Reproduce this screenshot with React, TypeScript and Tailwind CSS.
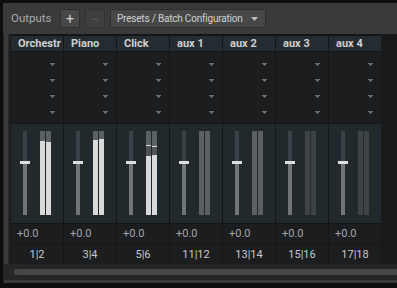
import React from "react";

type Ch = {
  name: string;
  port: string;
  meters: { fill: number; peak?: number }[] | null;
  meterBg: string;
};

const channels: Ch[] = [
  { name: "Orchestr", port: "1|2", meters: [{ fill: 74 }, { fill: 73 }], meterBg: "#5b6064" },
  { name: "Piano", port: "3|4", meters: [{ fill: 75 }, { fill: 76 }], meterBg: "#5b6064" },
  { name: "Click", port: "5|6", meters: [{ fill: 59, peak: 69 }, { fill: 60, peak: 68 }], meterBg: "#5b6064" },
  { name: "aux 1", port: "11|12", meters: null, meterBg: "#5c6064" },
  { name: "aux 2", port: "13|14", meters: null, meterBg: "#5c6064" },
  { name: "aux 3", port: "15|16", meters: null, meterBg: "#3d4347" },
  { name: "aux 4", port: "17|18", meters: null, meterBg: "#3d4347" },
];

const font = { fontFamily: "Roboto, 'DejaVu Sans', sans-serif" };

function Arrow() {
  return (
    <svg width="6" height="4" viewBox="0 0 6 4" className="block">
      <path d="M0 0H5V1H4V2H3V3H2V2H1V1H0Z" fill="#6b7075" />
    </svg>
  );
}

function Meter({ m, bg }: { m?: { fill: number; peak?: number }; bg: string }) {
  return (
    <div className="relative w-[5px] h-[84px]" style={{ background: bg }}>
      {m && (
        <>
          {m.peak !== undefined && (
            <>
              <div className="absolute left-0 right-0 bottom-0 bg-[#4d5357]" style={{ height: m.peak }} />
              <div className="absolute left-0 right-0 h-px bg-[#dcdcdc]" style={{ bottom: m.peak }} />
            </>
          )}
          <div className="absolute left-0 right-0 bottom-0 bg-[#d9d9d9]" style={{ height: m.fill }} />
        </>
      )}
    </div>
  );
}

function Column({ ch }: { ch: Ch }) {
  return (
    <div className="flex flex-col w-[52px] gap-px">
      <div className="h-[15px] bg-[#252c31] text-[#cdd0d2] text-[11px] font-bold leading-[15px] pl-[7px] overflow-hidden whitespace-nowrap">
        {ch.name}
      </div>
      <div className="h-[71px] bg-[#1c1d1f] flex flex-col pt-[11px] gap-[12px] items-end pr-[7px]">
        <Arrow />
        <Arrow />
        <Arrow />
        <Arrow />
      </div>
      <div className="h-[99px] bg-[#22292d] flex pt-[7px] pl-[9px]">
        <div className="relative w-[10px] h-[84px] flex justify-center">
          <div className="w-[4px] h-[84px] flex flex-col">
            <div className="h-[30px] bg-[#3a4146]" />
            <div className="flex-1 bg-[#717578]" />
          </div>
          <div className="absolute left-0 top-[30px] w-[10px] h-[3px] bg-[#dedede]" />
        </div>
        <div className="flex gap-px ml-[10px]">
          <Meter m={ch.meters?.[0]} bg={ch.meterBg} />
          <Meter m={ch.meters?.[1]} bg={ch.meterBg} />
        </div>
      </div>
      <div className="h-[20px] bg-[#1c1d1f] text-[#a3a5a7] text-[11px] leading-[20px] pl-[6px]">+0.0</div>
      <div className="h-[19px] bg-[#1c1d1f] text-[#c6c8ca] text-[11px] leading-[19px] text-center">{ch.port}</div>
    </div>
  );
}

export default function App() {
  return (
    <div className="w-[397px] h-[288px] bg-[#0e0e0e] pt-[3px] pl-[3px] overflow-hidden" style={font}>
      <div className="h-[31px] bg-[#3a3a3a] flex items-center pl-[8px] gap-[5px]">
        <span className="w-[44px] text-[#a9a9a9] text-[11.5px] whitespace-nowrap">Outputs</span>
        <div className="w-[20px] h-[19px] bg-[#474747] border border-[#2e2e2e] rounded-[1px] flex items-center justify-center text-[#cfcfcf] text-[14px] leading-none">+</div>
        <div className="w-[20px] h-[19px] bg-[#3f3f3f] border border-[#333] rounded-[1px] flex items-center justify-center text-[#5c5c5c] text-[14px] leading-none">−</div>
        <div className="w-[156px] h-[19px] bg-[#474747] border border-[#2e2e2e] rounded-[1px] flex items-center justify-between pl-[6px] pr-[7px] text-[#d0d0d0] text-[10px] tracking-[-0.2px] whitespace-nowrap">
          <span>Presets / Batch Configuration</span>
          <svg width="7" height="4" viewBox="0 0 7 4">
            <path d="M0 0H7L3.5 4Z" fill="#bdbdbd" />
          </svg>
        </div>
      </div>
      <div className="h-[249px] bg-[#262626] flex flex-col">
        <div className="flex h-[230px]">
          <div className="w-[4px] bg-[#3a3a3a] ml-px" />
          <div className="w-[2px]" />
          <div className="flex bg-[#141516] gap-px pt-[2px] pl-px h-[230px]">
            {channels.map((c) => (
              <Column key={c.name} ch={c} />
            ))}
          </div>
          <div className="flex-1 bg-[#191919]" />
        </div>
        <div className="h-[6px] bg-[#474747] ml-[11px] rounded-l-[3px] mt-[5px]" />
        <div className="h-[5px]" />
        <div className="h-[3px] bg-[#3a3a3a] ml-[1px]" />
      </div>
    </div>
  );
}
